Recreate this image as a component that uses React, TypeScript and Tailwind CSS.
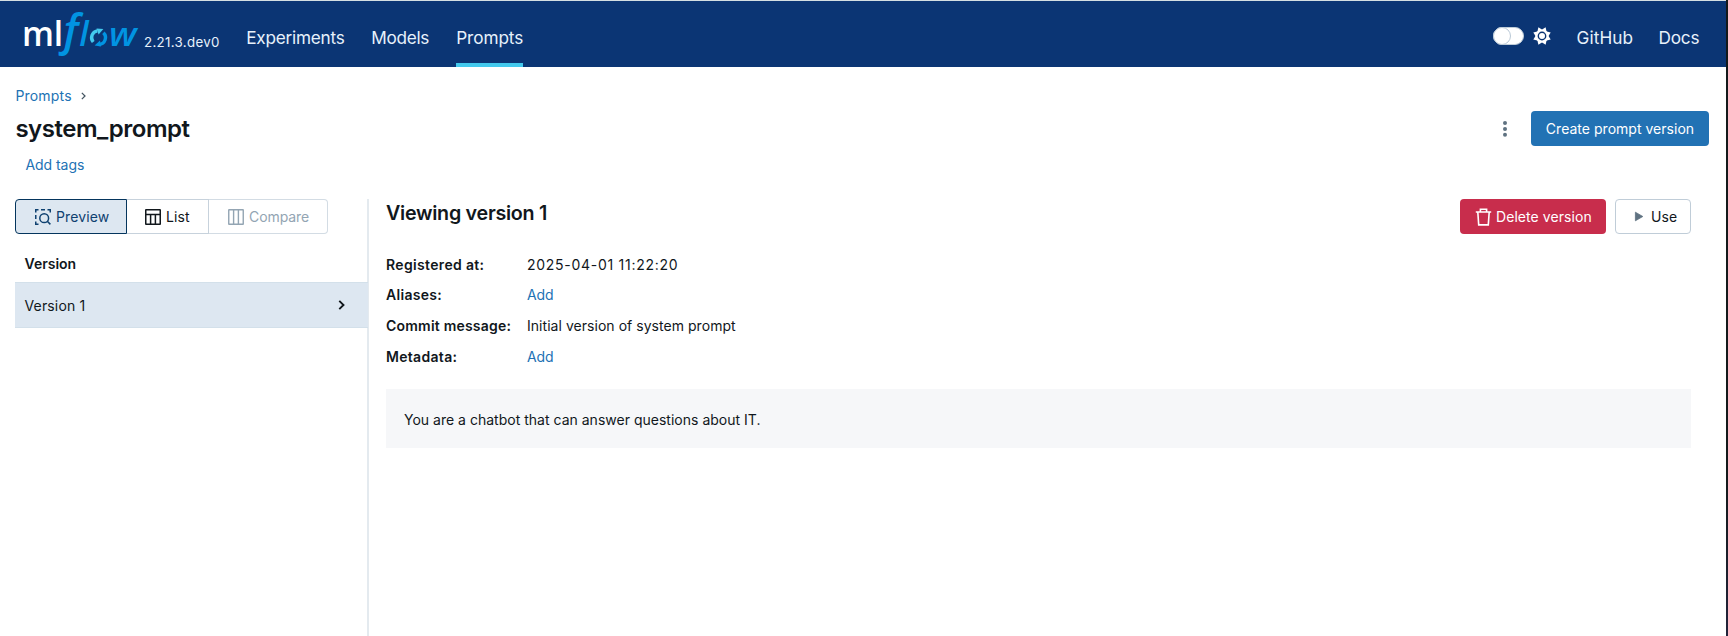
import type { ReactNode } from "react";

function Logo() {
  return (
    <svg width="122" height="60" viewBox="0 0 122 60" className="block shrink-0 overflow-visible" aria-label="mlflow">
      <g fontFamily="'Open Sans', sans-serif">
        <text x="3.9" y="40.2" fontSize="33.5" fontWeight="600" fill="#fff">ml</text>
        <g fill="#0194e2" fontStyle="italic">
          <text x="45.5" y="39.8" fontSize="43.5" fontWeight="600">f</text>
          <text x="61.3" y="40.2" fontSize="34" fontWeight="600">l</text>
          <text transform="translate(91 40.2) scale(1.15 1)" fontSize="32" fontWeight="600">w</text>
        </g>
      </g>
      <g fill="none" strokeWidth="3.4">
        <path d="M75.2 36A6.9 6.9 0 0 1 79.3 24.8" stroke="#43c9ed" />
        <path d="M85.4 26.7A6.9 6.9 0 0 1 81.1 38.5" stroke="#0194e2" />
      </g>
      <path d="M78.5 22.6L85.4 23L80.6 28.6Z" fill="#43c9ed" />
      <path d="M82 34.6L76.6 39.6L83 40.6Z" fill="#0194e2" />
    </svg>
  );
}

function NavLink({ children, active, className }: { children: ReactNode; active?: boolean; className?: string }) {
  return (
    <a className={`flex h-full items-center border-b-4 pt-[11px] text-[17.2px] leading-none text-[#e7f1fb] ${active ? "border-[#43c9ed]" : "border-transparent"} ${className ?? ""}`}>
      {children}
    </a>
  );
}

function PreviewIcon() {
  return (
    <svg width="16" height="16" viewBox="0 0 16 16" fill="none" stroke="currentColor" strokeWidth="1.5" className="shrink-0">
      <path d="M.75 3.5V.75H3.5M6 .75h4M12.5 .75h2.75V3.5M.75 6v4M.75 12.5v2.75H3.5" />
      <circle cx="9.2" cy="9.2" r="4.4" />
      <path d="M12.3 12.3L15.4 15.4" />
    </svg>
  );
}

function TableIcon() {
  return (
    <svg width="16" height="16" viewBox="0 0 16 16" fill="none" stroke="currentColor" strokeWidth="1.5" className="shrink-0">
      <rect x=".75" y=".75" width="14.5" height="14.5" rx=".3" />
      <path d="M.75 5.5h14.5M5.6 5.5v9.75M10.4 5.5v9.75" />
    </svg>
  );
}

function ColumnsIcon() {
  return (
    <svg width="16" height="16" viewBox="0 0 16 16" fill="none" stroke="currentColor" strokeWidth="1.4" className="shrink-0">
      <rect x=".75" y=".75" width="14.5" height="14.5" rx=".3" />
      <path d="M5.6 .75v14.5M10.4 .75v14.5" />
    </svg>
  );
}

function SunIcon() {
  const rays = [0, 45, 90, 135, 180, 225, 270, 315];
  return (
    <svg width="18" height="18" viewBox="-9 -9 18 18" className="shrink-0">
      {rays.map((a) => (
        <path key={a} d="M-3.4 -4.6L0 -9.4L3.4 -4.6Z" fill="#fff" transform={`rotate(${a + 22.5})`} />
      ))}
      <circle r="6.3" fill="#fff" />
      <circle r="3.7" fill="none" stroke="#0b3574" strokeWidth="1.4" />
    </svg>
  );
}

function Chevron({ className, width }: { className: string; width: number }) {
  return (
    <svg width="6" height="9" viewBox="0 0 6 9" fill="none" stroke="currentColor" strokeWidth={width} className={className}>
      <path d="M1 .8L4.8 4.5L1 8.2" />
    </svg>
  );
}

function Field({ label, children }: { label: ReactNode; children: ReactNode }) {
  return (
    <>
      <dt className="font-semibold">{label}</dt>
      <dd>{children}</dd>
    </>
  );
}

export default function App() {
  return (
    <div className="flex h-[636px] w-full overflow-hidden bg-white font-['Inter',sans-serif] text-[14px] leading-5 text-[#11171c]">
      <div className="flex min-w-0 flex-1 flex-col">
        <header className="flex h-[67px] shrink-0 border-t border-[#d5dfe2] bg-[#0b3574]">
          <div className="flex pl-[18px] pt-[5px]">
            <Logo />
            <span className="ml-[4px] mt-[28px] h-4 text-[13.3px] leading-4 tracking-[0.32px] text-[#e7f1fb]">2.21.3.dev0</span>
          </div>
          <nav className="ml-[26.5px] flex gap-[26px]">
            <NavLink className="w-[99px] tracking-[-0.235px]">Experiments</NavLink>
            <NavLink className="w-[59px] tracking-[-0.3px]">Models</NavLink>
            <NavLink active className="w-[67px] tracking-[-0.08px]">Prompts</NavLink>
          </nav>
          <div className="ml-auto flex">
            <div className="flex items-center gap-[8.5px] pt-[4px]">
              <div className="h-[18px] w-[31px] rounded-full border border-[#c0cdd8] bg-white">
                <div className="-ml-px -mt-px size-[18px] rounded-full border border-[#b9c8d6] bg-white" />
              </div>
              <SunIcon />
            </div>
            <NavLink className="ml-[26px] w-[57px] tracking-[0.09px]">GitHub</NavLink>
            <NavLink className="ml-[25px] mr-[25.5px] w-[42px] tracking-[-0.17px]">Docs</NavLink>
          </div>
        </header>

        <div className="flex items-center pl-[15.4px] pt-[19px] text-[#2272b4]">
          <span className="w-[65.6px] tracking-[0.2px]">Prompts</span>
          <Chevron className="h-[8px] w-[5px] text-[#445461]" width={1.5} />
        </div>
        <div className="mt-[5px] flex h-[35px] items-center pl-[15.4px] pr-[17px]">
          <h1 className="text-[24px] font-semibold leading-8 tracking-[-0.47px]">system_prompt</h1>
          <svg width="6" height="18" viewBox="0 0 6 18" fill="#5f7281" className="ml-auto mr-[23px]">
            <circle cx="3" cy="3.1" r="2" />
            <circle cx="3" cy="9" r="2" />
            <circle cx="3" cy="14.8" r="2" />
          </svg>
          <button className="h-[35px] w-[178px] rounded bg-[#2272b4] text-white tracking-[0.024px]">Create prompt version</button>
        </div>
        <a className="ml-[25.5px] mt-[9px] tracking-[-0.06px] text-[#2272b4]">Add tags</a>

        <main className="mt-6 flex min-h-0 flex-1">
          <aside className="w-[369px] shrink-0 border-r-2 border-[#e4eaef] pl-[15px]">
            <div className="flex h-[35px] w-[313px]">
              <button className="flex w-[112px] items-center rounded-l border border-[#04355d] bg-[#dde7f1] pl-[19px] tracking-[0.1px] text-[#0e4170]">
                <PreviewIcon />
                <span className="ml-[5px]">Preview</span>
              </button>
              <button className="flex w-[82px] items-center border-y border-r border-[#c7d2dc] pl-[18px] tracking-[0.1px]">
                <TableIcon />
                <span className="ml-[5px]">List</span>
              </button>
              <button className="flex flex-1 items-center rounded-r border-y border-r border-[#d3dce4] pl-[19px] tracking-[-0.08px] text-[#93a5b3]">
                <ColumnsIcon />
                <span className="ml-[5px]">Compare</span>
              </button>
            </div>
            <div className="pl-[9.5px] pt-[19.5px] font-semibold">Version</div>
            <div className="-mr-px mt-[8.5px] flex h-[46px] items-center justify-between border-y border-[#d3e0ea] bg-[#dde7f1] pl-[9.5px] pr-[23px]">
              <span className="pt-px tracking-[0.15px]">Version 1</span>
              <Chevron className="h-[10px] w-[7px]" width={1.7} />
            </div>
          </aside>

          <section className="min-w-0 flex-1 pl-[17px] pr-[35px]">
            <div className="flex h-[35px]">
              <h2 className="pt-px text-[19.7px] font-semibold leading-[27px] tracking-[-0.276px]">Viewing version 1</h2>
              <button className="ml-auto flex w-[145.5px] items-center rounded bg-[#c82d4c] pl-[15px] tracking-[0.072px] text-white">
                <svg width="17" height="18" viewBox="0 0 17 18" fill="none" stroke="currentColor" strokeWidth="1.6" className="shrink-0">
                  <path d="M.8 4h15.4M5.4 4V1.2h6.2V4M2.8 4l.9 12.9h9.6L14.2 4" />
                </svg>
                <span className="ml-[4px] whitespace-nowrap">Delete version</span>
              </button>
              <button className="ml-[9px] flex w-[76.5px] items-center rounded border border-[#c0cdd8] pl-[18px] tracking-[0.09px]">
                <svg width="10" height="11" viewBox="0 0 10 11" className="shrink-0">
                  <path d="M1.4 1.2L8.8 5.5L1.4 9.8Z" fill="#5f7281" stroke="#5f7281" strokeWidth=".8" strokeLinejoin="round" />
                </svg>
                <span className="ml-[7.5px]">Use</span>
              </button>
            </div>
            <dl className="mt-[20.6px] grid grid-cols-[141px_1fr] gap-y-[10.8px]">
              <Field label={<span className="tracking-[0.34px]">Registered at:</span>}>
                <span className="tracking-[0.72px]">2025-04-01 11:22:20</span>
              </Field>
              <Field label={<span className="tracking-[0.3px]">Aliases:</span>}>
                <a className="tracking-[-0.1px] text-[#2272b4]">Add</a>
              </Field>
              <Field label={<span className="tracking-[0.21px]">Commit message:</span>}>
                <span className="tracking-[0.04px]">Initial version of system prompt</span>
              </Field>
              <Field label={<span className="tracking-[0.3px]">Metadata:</span>}>
                <a className="tracking-[-0.1px] text-[#2272b4]">Add</a>
              </Field>
            </dl>
            <div className="mt-[22.4px] flex h-[59px] items-center bg-[#f6f7f9] pl-[18px] pt-[3px] tracking-[0.01px]">
              You are a chatbot that can answer questions about IT.
            </div>
          </section>
        </main>
      </div>
      <div className="w-[2px] shrink-0 bg-linear-to-b from-[#14191b] from-75% to-[#22233a]" />
    </div>
  );
}
